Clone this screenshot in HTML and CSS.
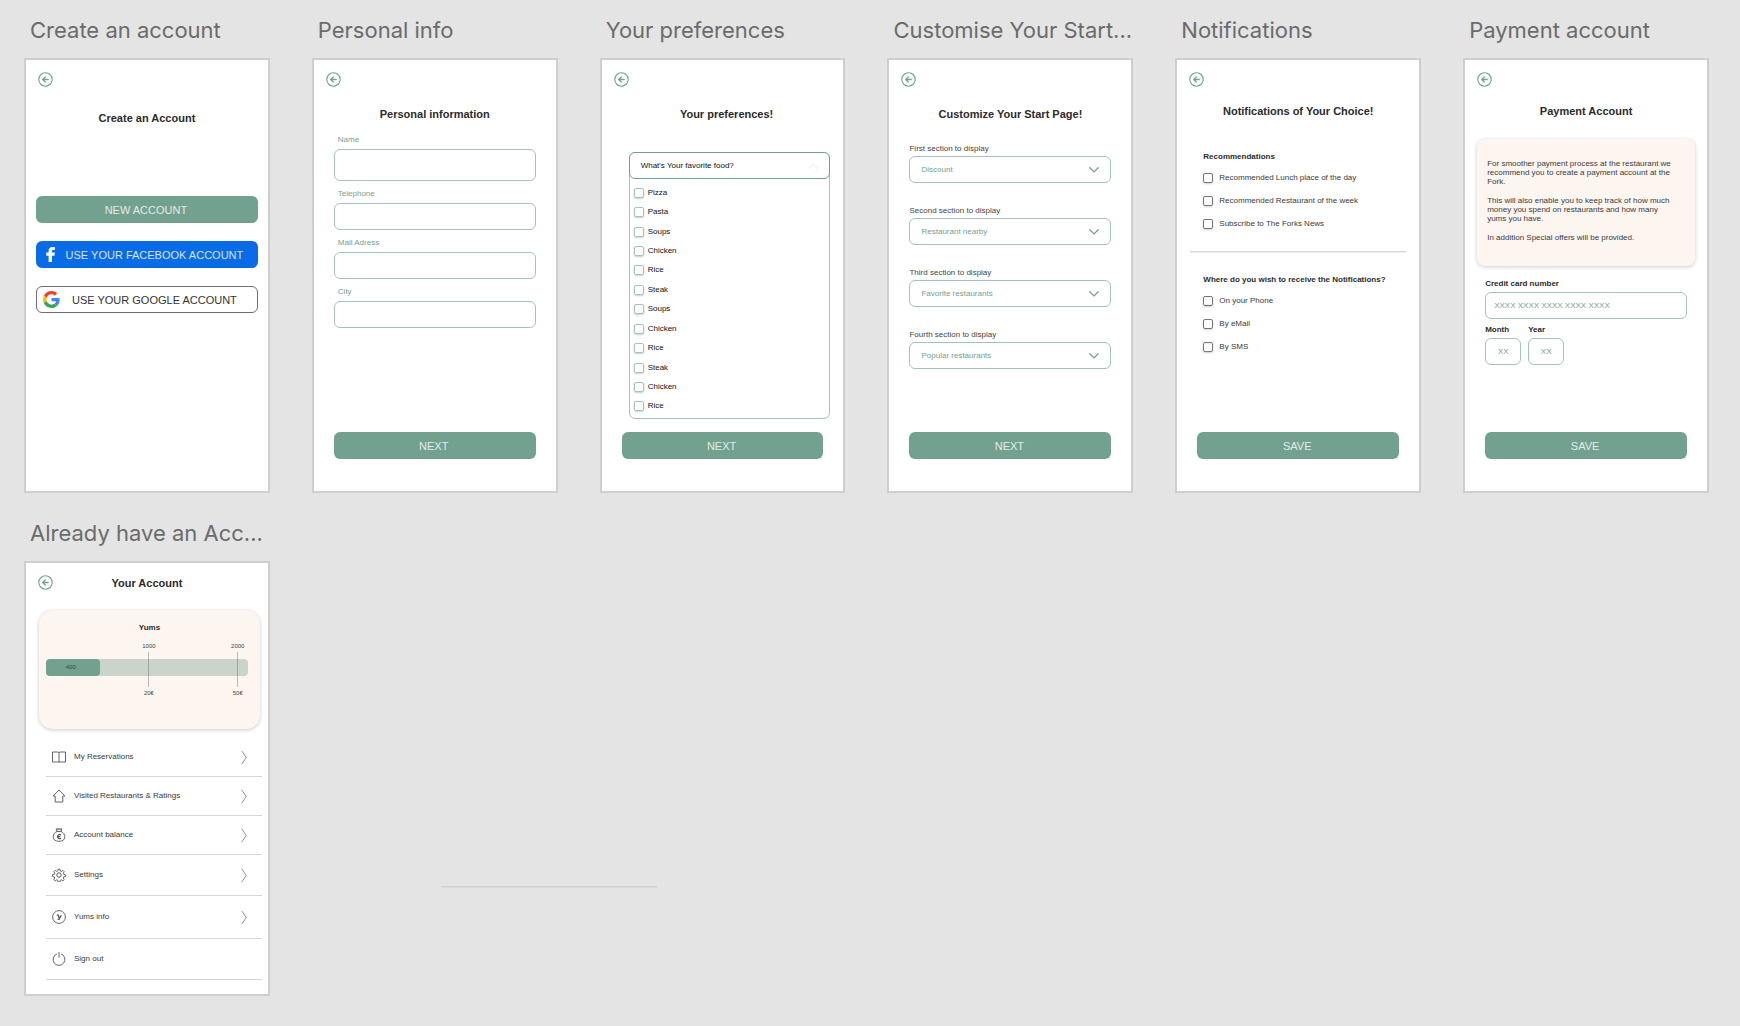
FILE: index.html
```html
<!DOCTYPE html>
<html lang="en">
<head>
<meta charset="utf-8">
<meta name="viewport" content="width=device-width, initial-scale=1">
<title>Account screens</title>
<link rel="stylesheet" href="styles.css">
</head>
<body>
<svg class="sprite" aria-hidden="true">
  <symbol id="i-back" viewBox="0 0 15 15"><g fill="none" stroke="currentColor" stroke-linecap="round" stroke-linejoin="round"><circle cx="7.5" cy="7.5" r="6.7" stroke-width="1.1"/><path d="M10.2 7.5H4.9M7.3 5 4.7 7.5 7.3 10" stroke-width="1.3"/></g></symbol>
  <symbol id="i-down" viewBox="0 0 10 6"><path d="M.8.8 5 4.900 9.200.8" fill="none" stroke="currentColor" stroke-width="1.3" stroke-linecap="round"/></symbol>
  <symbol id="i-next" viewBox="0 0 6 15"><path d="M.7.8 5.200 7.500.7 14.200" fill="none" stroke="currentColor" stroke-width=".9"/></symbol>
</svg>

<main class="canvas">
  <section class="artboard">
    <h2 class="artboard-name">Create an account</h2>
    <div class="screen">
      <button class="back" type="button" aria-label="Back"><svg><use href="#i-back"/></svg></button>
      <h3 class="heading heading--low">Create an Account</h3>
      <div class="signup">
        <button class="btn" type="button">NEW ACCOUNT</button>
        <button class="btn btn--facebook" type="button">
          <svg class="brand" viewBox="0 0 18 18"><path d="M7 17V10.4H4.5V7H7V5.2C7 2.4 8.6 1 11 1h2.6v3.2h-1.700c-1 0-1.300.5-1.300 1.300V7h3l-.4 3.400h-2.600V17z" fill="#fff"/></svg>
          <span>USE YOUR FACEBOOK ACCOUNT</span>
        </button>
        <button class="btn btn--google" type="button">
          <svg class="brand" viewBox="0 0 48 48"><path fill="#EA4335" d="M24 9.5c3.54 0 6.71 1.22 9.21 3.6l6.85-6.85C35.9 2.38 30.47 0 24 0 14.62 0 6.51 5.38 2.56 13.22l7.98 6.19C12.43 13.72 17.74 9.5 24 9.5z"/><path fill="#4285F4" d="M46.98 24.55c0-1.57-.15-3.09-.38-4.55H24v9.02h12.94c-.58 2.96-2.26 5.48-4.78 7.18l7.73 6c4.51-4.18 7.09-10.36 7.09-17.65z"/><path fill="#FBBC05" d="M10.53 28.59c-.48-1.45-.76-2.99-.76-4.59s.27-3.14.76-4.59l-7.98-6.19C.92 16.46 0 20.12 0 24c0 3.88.92 7.54 2.56 10.78l7.97-6.19z"/><path fill="#34A853" d="M24 48c6.48 0 11.93-2.13 15.89-5.81l-7.73-6c-2.15 1.45-4.92 2.3-8.16 2.3-6.26 0-11.57-4.22-13.47-9.91l-7.98 6.19C6.51 42.62 14.62 48 24 48z"/></svg>
          <span>USE YOUR GOOGLE ACCOUNT</span>
        </button>
      </div>
    </div>
  </section>

  <section class="artboard">
    <h2 class="artboard-name">Personal info</h2>
    <form class="screen">
      <button class="back" type="button" aria-label="Back"><svg><use href="#i-back"/></svg></button>
      <h3 class="heading heading--mid">Personal information</h3>
      <div class="fields">
        <label class="label label--green" for="name">Name</label>
        <input class="box box--tall" id="name" type="text">
        <label class="label label--green" for="phone">Telephone</label>
        <input class="box" id="phone" type="tel">
        <label class="label label--green" for="mail">Mail Adress</label>
        <input class="box" id="mail" type="email">
        <label class="label label--green" for="city">City</label>
        <input class="box" id="city" type="text">
      </div>
      <button class="btn btn--submit" type="button">NEXT</button>
    </form>
  </section>

  <section class="artboard">
    <h2 class="artboard-name">Your preferences</h2>
    <form class="screen">
      <button class="back" type="button" aria-label="Back"><svg><use href="#i-back"/></svg></button>
      <h3 class="heading heading--mid heading--indent">Your preferences!</h3>
      <div class="panel">
        <button class="panel-head" type="button"><span>What's Your favorite food?</span><svg class="chevron chevron--up"><use href="#i-down"/></svg></button>
        <div class="foods">
          <label class="check"><input type="checkbox">Pizza</label>
          <label class="check"><input type="checkbox">Pasta</label>
          <label class="check"><input type="checkbox">Soups</label>
          <label class="check"><input type="checkbox">Chicken</label>
          <label class="check"><input type="checkbox">Rice</label>
          <label class="check"><input type="checkbox">Steak</label>
          <label class="check"><input type="checkbox">Soups</label>
          <label class="check"><input type="checkbox">Chicken</label>
          <label class="check"><input type="checkbox">Rice</label>
          <label class="check"><input type="checkbox">Steak</label>
          <label class="check"><input type="checkbox">Chicken</label>
          <label class="check"><input type="checkbox">Rice</label>
        </div>
      </div>
      <button class="btn btn--submit" type="button">NEXT</button>
    </form>
  </section>

  <section class="artboard">
    <h2 class="artboard-name">Customise Your Start...</h2>
    <form class="screen">
      <button class="back" type="button" aria-label="Back"><svg><use href="#i-back"/></svg></button>
      <h3 class="heading heading--mid">Customize Your Start Page!</h3>
      <div class="sections">
        <div class="choice">
          <label class="label" for="s1">First section to display</label>
          <div class="dropdown"><select class="box" id="s1"><option>Discount</option></select><svg class="chevron"><use href="#i-down"/></svg></div>
        </div>
        <div class="choice">
          <label class="label" for="s2">Second section to display</label>
          <div class="dropdown"><select class="box" id="s2"><option>Restaurant nearby</option></select><svg class="chevron"><use href="#i-down"/></svg></div>
        </div>
        <div class="choice">
          <label class="label" for="s3">Third section to display</label>
          <div class="dropdown"><select class="box" id="s3"><option>Favorite restaurants</option></select><svg class="chevron"><use href="#i-down"/></svg></div>
        </div>
        <div class="choice">
          <label class="label" for="s4">Fourth section to display</label>
          <div class="dropdown"><select class="box" id="s4"><option>Popular restaurants</option></select><svg class="chevron"><use href="#i-down"/></svg></div>
        </div>
      </div>
      <button class="btn btn--submit" type="button">NEXT</button>
    </form>
  </section>

  <section class="artboard">
    <h2 class="artboard-name">Notifications</h2>
    <form class="screen">
      <button class="back" type="button" aria-label="Back"><svg><use href="#i-back"/></svg></button>
      <h3 class="heading">Notifications of Your Choice!</h3>
      <div class="notify">
        <div class="group">
          <h4 class="subheading">Recommendations</h4>
          <div class="checks">
            <label class="check check--dark"><input type="checkbox">Recommended Lunch place of the day</label>
            <label class="check check--dark"><input type="checkbox">Recommended Restaurant of the week</label>
            <label class="check check--dark"><input type="checkbox">Subscribe to The Forks News</label>
          </div>
        </div>
        <hr class="divider">
        <div class="group">
          <h4 class="subheading">Where do you wish to receive the Notifications?</h4>
          <div class="checks">
            <label class="check check--dark"><input type="checkbox">On your Phone</label>
            <label class="check check--dark"><input type="checkbox">By eMail</label>
            <label class="check check--dark"><input type="checkbox">By SMS</label>
          </div>
        </div>
      </div>
      <button class="btn btn--submit" type="button">SAVE</button>
    </form>
  </section>

  <section class="artboard">
    <h2 class="artboard-name">Payment account</h2>
    <form class="screen">
      <button class="back" type="button" aria-label="Back"><svg><use href="#i-back"/></svg></button>
      <h3 class="heading">Payment Account</h3>
      <div class="note">
        <p>For smoother payment process at the restaurant we recommend you to create a payment account at the Fork.</p>
        <p>This will also enable you to keep track of how much money you spend on restaurants and how many yums you have.</p>
        <p>In addition Special offers will be provided.</p>
      </div>
      <div class="card-form">
        <div class="field">
          <label class="label label--bold" for="card">Credit card number</label>
          <input class="box" id="card" type="text" placeholder="XXXX XXXX XXXX XXXX XXXX">
        </div>
        <div class="expiry">
          <div class="field">
            <label class="label label--bold" for="month">Month</label>
            <input class="box box--small" id="month" type="text" placeholder="XX">
          </div>
          <div class="field">
            <label class="label label--bold" for="year">Year</label>
            <input class="box box--small" id="year" type="text" placeholder="XX">
          </div>
        </div>
      </div>
      <button class="btn btn--submit" type="button">SAVE</button>
    </form>
  </section>

  <section class="artboard">
    <h2 class="artboard-name">Already have an Acc...</h2>
    <div class="screen screen--account">
      <header class="topbar">
        <button class="back" type="button" aria-label="Back"><svg><use href="#i-back"/></svg></button>
        <h3 class="heading heading--bar">Your Account</h3>
      </header>
      <div class="yums">
        <h4 class="subheading">Yums</h4>
        <div class="meter">
          <div class="meter-fill" style="width: 27%">400</div>
          <div class="mark" style="left: 51%"><span>1000</span><span>20€</span></div>
          <div class="mark" style="left: 95%"><span>2000</span><span>50€</span></div>
        </div>
      </div>
      <nav>
        <ul class="menu">
          <li><a href="#"><svg class="icon" viewBox="0 0 14 14"><path d="M.5 2h5.500L7 2.700 8 2h5.500v10H.5zM7 2.700V12"/></svg><span>My Reservations</span><svg class="next"><use href="#i-next"/></svg></a></li>
          <li><a href="#"><svg class="icon" viewBox="0 0 14 14"><path d="M1.200 7 7 1l5.800 6M1.200 7h2v6h7.600V7h2"/></svg><span>Visited Restaurants &amp; Ratings</span><svg class="next"><use href="#i-next"/></svg></a></li>
          <li><a href="#"><svg class="icon" viewBox="0 0 14 14"><path d="M5 3.500C2.500 4.500 1.200 6.500 1.200 8.800c0 2.900 2 4.500 5.800 4.500s5.800-1.600 5.800-4.500c0-2.300-1.300-4.300-3.800-5.300M4 .9h6L9 3.500H5zM6 1v1.300M8 1v1.300"/><path class="icon-bold" d="M9 7C7.300 5.900 5.600 6.800 5.600 8.600S7.300 11.300 9 10.200M5 8.600h3.200"/></svg><span>Account balance</span><svg class="next"><use href="#i-next"/></svg></a></li>
          <li><a href="#"><svg class="icon" viewBox="0 0 24 24"><g stroke-width="1.700"><circle cx="12" cy="12" r="3.800"/><path d="M10.200 1.200h3.600l.6 3.300 2.100.9 2.700-1.900 2.500 2.500-1.900 2.700.9 2.100 3.300.6v3.600l-3.300.6-.9 2.100 1.900 2.700-2.500 2.500-2.700-1.900-2.100.9-.6 3.300h-3.600l-.6-3.300-2.100-.9-2.700 1.900-2.500-2.500 1.900-2.700-.9-2.100L0 14.800v-3.600l3.300-.6.9-2.100-1.900-2.700 2.500-2.500 2.700 1.900 2.100-.9z" transform="translate(1 1) scale(.92)"/></g></svg><span>Settings</span><svg class="next"><use href="#i-next"/></svg></a></li>
          <li><a href="#"><svg class="icon" viewBox="0 0 14 14"><circle cx="7" cy="7" r="6.400"/><path class="icon-bold" d="M4.800 5.200h1.400L7.300 8M9.300 5.200 7 9.400H5.600"/></svg><span>Yums info</span><svg class="next"><use href="#i-next"/></svg></a></li>
          <li><a href="#"><svg class="icon" viewBox="0 0 14 14"><path d="M5 1.900a5.900 5.900 0 1 0 4 0M7 0v5.500"/></svg><span>Sign out</span></a></li>
        </ul>
      </nav>
    </div>
  </section>

  <hr class="divider stray-line">
</main>
</body>
</html>
```
FILE: styles.css
```css
:root {
  --green: #73a18f;
  --green-soft: #a3c4b8;
  --ink: #2b2b2b;
  --line: #d6d6d6;
  --blush: #fdf5f0;
}

* { box-sizing: border-box; }

body {
  margin: 0;
  background: #e4e4e4;
  color: var(--ink);
  font: 8px/10px "Liberation Sans", Arial, sans-serif;
}

h2, h3, h4, p, ul { margin: 0; padding: 0; }
button, input, select { font: inherit; color: inherit; margin: 0; }
button { cursor: pointer; }
form { margin: 0; }

.sprite { position: absolute; width: 0; height: 0; }

.canvas {
  position: relative;
  display: grid;
  grid-template-columns: repeat(6, minmax(0, 1fr));
  gap: 26px 42px;
  padding: 16px 31px 28px 24px;
}

.artboard {
  display: flex;
  flex-direction: column;
  gap: 14px;
}

.artboard-name {
  padding-left: 6px;
  color: #6b6b6b;
  font: 400 22px/28px Inter, "Liberation Sans", sans-serif;
  white-space: nowrap;
}

.screen {
  display: flex;
  flex: 1;
  flex-direction: column;
  min-height: 435px;
  padding: 12px 20px 32px;
  border: 2px solid #cecece;
  background: #fff;
}

.back {
  width: 15px;
  height: 15px;
  margin-left: -8px;
  padding: 0;
  border: 0;
  background: none;
  color: var(--green);
}

.back svg { display: block; width: 15px; height: 15px; }

.heading {
  margin: 17px -10px 0;
  font-size: 11px;
  line-height: 14px;
  text-align: center;
}

.heading--mid { margin-top: 20px; }
.heading--low { margin-top: 24px; }
.heading--indent { padding-left: 8px; }

.btn {
  display: flex;
  align-items: center;
  justify-content: center;
  height: 27px;
  padding: 0 8px 0 6px;
  border: 0;
  border-radius: 6px;
  background: var(--green);
  color: #e3ece8;
  font-size: 11px;
}

.btn--submit { margin-top: auto; }

.signup {
  display: flex;
  flex-direction: column;
  gap: 18px;
  margin: 71px -10px 0;
}

.btn--facebook { background: #0a6be6; color: #d5e5fa; }
.btn--google { border: 1px solid #6e6e6e; background: #fff; color: #333; }
.btn span { flex: 1; }
.brand { width: 17px; height: 17px; }

.label { color: #444; }
.label--bold, .subheading { color: var(--ink); font-size: 8px; font-weight: 700; }

.box {
  width: 100%;
  height: 27px;
  padding: 0 8px;
  border: 1px solid var(--green-soft);
  border-radius: 6px;
  background: #fff;
  color: var(--green);
}

.box::placeholder { color: var(--green); opacity: 1; }
.box--tall { height: 32px; }
.box--small { width: 36px; padding: 0; text-align: center; }

.fields {
  display: flex;
  flex-direction: column;
  margin-top: 14px;
}

.label--green { padding-left: 4px; color: var(--green); }
.fields .box { margin: 4px 0 8px; }

.panel {
  display: flex;
  flex: 1;
  flex-direction: column;
  margin: 31px -7px 13px 7px;
  border: 1px solid var(--green-soft);
  border-radius: 6px;
}

.panel-head {
  display: flex;
  align-items: center;
  justify-content: space-between;
  height: 27px;
  margin: -1px -1px 0;
  padding: 0 11px;
  border: 1px solid var(--green);
  border-radius: 6px;
  background: #fff;
  color: #111;
}

.chevron { width: 10px; height: 6px; color: var(--green); }
.chevron--up { color: #f6f1ec; transform: rotate(180deg); }

.foods {
  display: flex;
  flex: 1;
  flex-direction: column;
  padding: 4px 4px 2px;
  color: #111;
}

.check { display: flex; align-items: center; gap: 4px; }
.foods .check { flex: 1; }

.check input {
  width: 10px;
  height: 10px;
  appearance: none;
  border: 1px solid var(--green-soft);
  border-radius: 2px;
  background: #fff;
  box-shadow: 0 1px 2px rgba(0, 0, 0, .2);
}

.check--dark { gap: 6px; height: 11px; color: #3a3a3a; }
.check--dark input { border-color: #777; }

.sections {
  display: flex;
  flex-direction: column;
  gap: 23px;
  margin-top: 23px;
}

.choice { display: flex; flex-direction: column; gap: 2px; }
.dropdown { display: grid; align-items: center; }
.dropdown > * { grid-area: 1 / 1; }
.dropdown .box { appearance: none; padding: 0 11px; }
.dropdown .chevron { justify-self: end; margin-right: 12px; pointer-events: none; }

.notify { margin: 34px -7px 0; }

.group {
  display: flex;
  flex-direction: column;
  gap: 10px;
  padding-left: 13px;
  white-space: nowrap;
}

.checks { display: flex; flex-direction: column; gap: 12px; }

.divider {
  height: 2px;
  margin: 22px 0;
  border: 0;
  border-top: 1px solid var(--line);
  background: #ececec;
}

.note {
  display: flex;
  flex-direction: column;
  gap: 10px;
  margin: 21px -8px 0;
  padding: 20px 16px 24px 10px;
  border-radius: 8px;
  background: var(--blush);
  box-shadow: 0 1px 4px rgba(0, 0, 0, .2);
  color: #3a3a3a;
  line-height: 9px;
}

.card-form {
  display: flex;
  flex-direction: column;
  gap: 6px;
  margin-top: 13px;
}

.field { display: flex; flex-direction: column; gap: 3px; }
.expiry { display: flex; gap: 7px; }

.screen--account { padding-right: 6px; padding-bottom: 12px; }

.topbar { display: flex; align-items: center; }
.heading--bar { flex: 1; margin: 0 21px 0 0; }

.yums {
  margin: 20px 2px 0 -7px;
  padding: 13px 12px 53px 7px;
  border-radius: 14px;
  background: var(--blush);
  box-shadow: 0 1px 4px rgba(0, 0, 0, .2);
}

.yums .subheading { padding-left: 5px; text-align: center; }

.meter {
  position: relative;
  height: 17px;
  margin-top: 26px;
  border-radius: 4px;
  background: #cbd4ca;
  color: #444;
  font-size: 6px;
}

.meter-fill {
  height: 17px;
  padding-right: 5px;
  border-radius: 4px;
  background: var(--green);
  line-height: 17px;
  text-align: center;
}

.mark {
  position: absolute;
  top: -18px;
  bottom: -22px;
  display: flex;
  flex-direction: column;
  justify-content: space-between;
  align-items: center;
  width: 20px;
  margin-left: -10px;
  line-height: 10px;
  background: linear-gradient(rgba(90, 90, 90, .4), rgba(90, 90, 90, .4)) center / 1px 35px no-repeat;
}

.menu { margin-top: 9px; list-style: none; }

.menu a {
  display: flex;
  align-items: center;
  gap: 8px;
  height: 39px;
  padding: 0 15px 0 6px;
  border-bottom: 1px solid var(--line);
  color: #3a3a3a;
  text-decoration: none;
}

.menu li:nth-child(n + 4) a { height: 41px; }
.menu li:nth-child(5) a { height: 43px; }
.menu span { flex: 1; }
.next { width: 6px; height: 15px; color: #8a8a8a; }

.icon {
  width: 14px;
  height: 14px;
  fill: none;
  stroke: #555;
  stroke-width: .9;
}

.icon-bold { stroke-width: 1.3; }

.stray-line {
  position: absolute;
  top: 886px;
  left: 441px;
  width: 216px;
  margin: 0;
  border-color: #d0d0d0;
  background: #dadada;
}
```
